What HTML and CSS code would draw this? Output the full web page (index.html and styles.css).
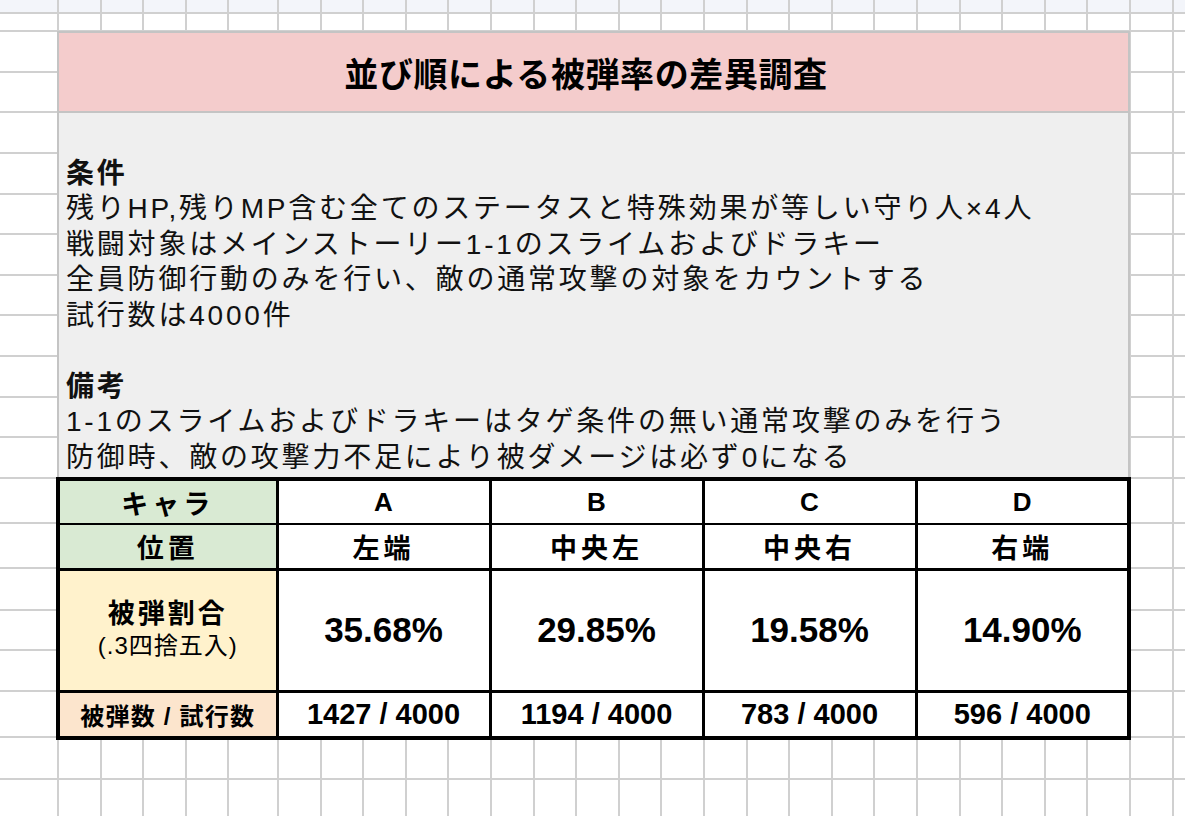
FILE: index.html
```html
<!DOCTYPE html>
<html lang="ja">
<head>
<meta charset="utf-8">
<title>並び順による被弾率の差異調査</title>
<link rel="stylesheet" href="styles.css">
</head>
<body>
<div class="sheet">
  <div class="title">並び順による被弾率の差異調査</div>
  <div class="notes">
    <div class="line head">条件</div>
    <div class="line">残りHP,残りMP含む全てのステータスと特殊効果が等しい守り人×4人</div>
    <div class="line">戦闘対象はメインストーリー1-1のスライムおよびドラキー</div>
    <div class="line">全員防御行動のみを行い、敵の通常攻撃の対象をカウントする</div>
    <div class="line">試行数は4000件</div>
    <div class="line blank"></div>
    <div class="line head">備考</div>
    <div class="line">1-1のスライムおよびドラキーはタゲ条件の無い通常攻撃のみを行う</div>
    <div class="line">防御時、敵の攻撃力不足により被ダメージは必ず0になる</div>
  </div>
  <table class="data">
    <colgroup>
      <col class="c-label">
      <col class="c-val"><col class="c-val"><col class="c-val"><col class="c-val">
    </colgroup>
    <tr class="r1">
      <td class="hd jp">キャラ</td>
      <td class="abc">A</td>
      <td class="abc">B</td>
      <td class="abc">C</td>
      <td class="abc">D</td>
    </tr>
    <tr class="r2">
      <td class="hd jp">位置</td>
      <td class="jp">左端</td>
      <td class="jp">中央左</td>
      <td class="jp">中央右</td>
      <td class="jp">右端</td>
    </tr>
    <tr class="r3">
      <td class="rate"><div class="rate-main">被弾割合</div><div class="rate-sub">(.3四捨五入)</div></td>
      <td class="pct">35.68%</td>
      <td class="pct">29.85%</td>
      <td class="pct">19.58%</td>
      <td class="pct">14.90%</td>
    </tr>
    <tr class="r4">
      <td class="cnt">被弾数 / 試行数</td>
      <td class="num">1427 / 4000</td>
      <td class="num">1194 / 4000</td>
      <td class="num">783 / 4000</td>
      <td class="num">596 / 4000</td>
    </tr>
  </table>
</div>
</body>
</html>
```
FILE: styles.css
```css
* { box-sizing: border-box; }

html, body { margin: 0; padding: 0; }

body {
  width: 1185px;
  height: 816px;
  overflow: hidden;
  font-family: "Liberation Sans", "Noto Sans CJK JP", sans-serif;
  color: #000;
  background:
    repeating-linear-gradient(to right, #d0d0d0 0 2px, transparent 2px 42.6px) 277px 0 / 910px 100% no-repeat,
    repeating-linear-gradient(to right, #d0d0d0 0 2px, transparent 2px 42.6px) 57px 0 / 212px 100% no-repeat,
    repeating-linear-gradient(to bottom, #d0d0d0 0 2px, transparent 2px 40.64px) 0 30px / 100% 450px no-repeat,
    linear-gradient(#d0d0d0, #d0d0d0) 0 12px / 100% 2px no-repeat,
    linear-gradient(#d0d0d0, #d0d0d0) 0 522px / 100% 2px no-repeat,
    linear-gradient(#d0d0d0, #d0d0d0) 0 567px / 100% 2px no-repeat,
    linear-gradient(#d0d0d0, #d0d0d0) 0 609px / 100% 2px no-repeat,
    linear-gradient(#d0d0d0, #d0d0d0) 0 649px / 100% 2px no-repeat,
    linear-gradient(#d0d0d0, #d0d0d0) 0 690px / 100% 2px no-repeat,
    linear-gradient(#d0d0d0, #d0d0d0) 0 736px / 100% 2px no-repeat,
    linear-gradient(#d0d0d0, #d0d0d0) 0 778px / 100% 2px no-repeat,
    linear-gradient(#f3f5fa, #f3f5fa) 0 0 / 100% 13px no-repeat,
    #ffffff;
}

.sheet {
  padding: 31px 0 0 57px;
}

.title {
  width: 1073px;
  height: 82px;
  background: #f4cccc;
  border: 2px solid #c4c4c4;
  display: flex;
  align-items: center;
  justify-content: center;
  padding-right: 15px;
  font-size: 34px;
  font-weight: 700;
  letter-spacing: 0.6px;
  color: #000;
}

.notes {
  width: 1073px;
  height: 364px;
  background: #efefef;
  border-left: 2px solid #c4c4c4;
  border-right: 2px solid #c4c4c4;
  display: flex;
  flex-direction: column;
  justify-content: flex-end;
  padding: 0 8px 2px 7px;
  font-size: 28px;
  line-height: 35.5px;
  letter-spacing: 2.8px;
  color: #111;
  white-space: nowrap;
}

.line.head { font-weight: 700; }
.line.blank { height: 35.5px; }

.data {
  border-collapse: collapse;
  table-layout: fixed;
  width: 1075px;
  margin-left: -1px;
  border: 4px solid #000;
}

.c-label { width: 219px; }
.c-val { width: 213px; }

.data td {
  border: 3px solid #000;
  padding: 0;
  text-align: center;
  vertical-align: middle;
  font-weight: 700;
  background: #fff;
  white-space: nowrap;
}

.r1 td { height: 45px; border-bottom-width: 2px; }
.r2 td { height: 45px; border-top-width: 2px; }
.r3 td { height: 122px; }
.r4 td { height: 47px; }

.data td.hd { background: #d9ead3; }
.data td.rate { background: #fff2cc; }
.data td.cnt { background: #fce5cd; font-size: 24px; letter-spacing: 1.2px; }

.jp { font-size: 27px; letter-spacing: 4px; }
.abc { font-size: 26px; }

.rate-main { font-size: 27px; letter-spacing: 3px; line-height: 32px; }
.rate-sub { font-size: 24px; font-weight: 400; letter-spacing: 1px; line-height: 32px; }

.pct { font-size: 35px; }
.num { font-size: 29px; }
```
